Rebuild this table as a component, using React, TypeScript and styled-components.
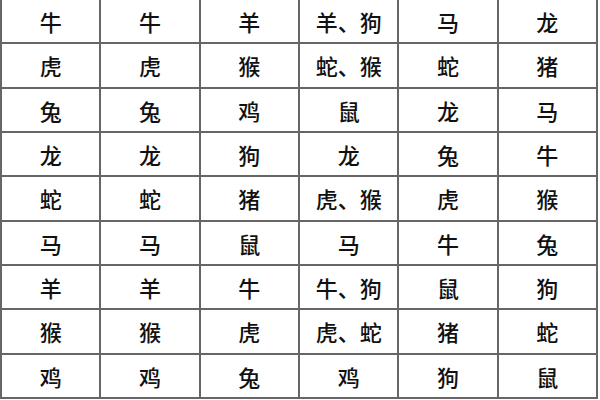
import styled, { createGlobalStyle } from "styled-components"

const GlobalStyle = createGlobalStyle`
  html, body {
    margin: 0;
    padding: 0;
    background: #fff;
    overflow: hidden;
  }
`

const Page = styled.div`
  width: 600px;
  height: 400px;
  overflow: hidden;
  background: #fff;
`

const Table = styled.table`
  width: 598px;
  height: 401px;
  margin-top: -2px;
  border-collapse: collapse;
  table-layout: fixed;
  font-family: "Noto Sans CJK SC", "Noto Sans", sans-serif;
`

const Row = styled.tr`
  height: 44px;
`

const Cell = styled.td`
  border: 2px solid #666;
  padding: 0;
  text-align: center;
  vertical-align: middle;
  font-size: 22px;
  font-weight: 500;
  line-height: 1;
  color: #111;
`

const rows = [
  ["牛", "牛", "羊", "羊、狗", "马", "龙"],
  ["虎", "虎", "猴", "蛇、猴", "蛇", "猪"],
  ["兔", "兔", "鸡", "鼠", "龙", "马"],
  ["龙", "龙", "狗", "龙", "兔", "牛"],
  ["蛇", "蛇", "猪", "虎、猴", "虎", "猴"],
  ["马", "马", "鼠", "马", "牛", "兔"],
  ["羊", "羊", "牛", "牛、狗", "鼠", "狗"],
  ["猴", "猴", "虎", "虎、蛇", "猪", "蛇"],
  ["鸡", "鸡", "兔", "鸡", "狗", "鼠"],
]

export default function App() {
  return (
    <Page>
      <GlobalStyle />
      <Table>
        <tbody>
          {rows.map((row, i) => (
            <Row key={i}>
              {row.map((text, j) => (
                <Cell key={j}>{text}</Cell>
              ))}
            </Row>
          ))}
        </tbody>
      </Table>
    </Page>
  )
}
